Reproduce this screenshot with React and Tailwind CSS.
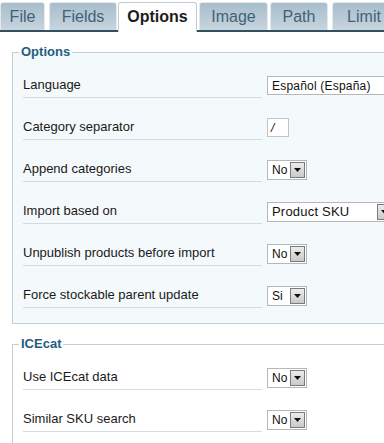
import React from "react";

function Arrow() {
  return (
    <div className="flex items-center justify-center w-[15px] h-[16px] border border-[#7b7b7b] bg-gradient-to-b from-[#ececec] to-[#c9c9c9] shrink-0">
      <svg width="7" height="4" viewBox="0 0 7 4">
        <polygon points="0,0 7,0 3.5,4" fill="#111" />
      </svg>
    </div>
  );
}

function SmallSelect({ value }) {
  return (
    <div className="flex items-center justify-between w-[40px] h-[20px] border border-[#b3b8bc] bg-white pl-[4px] pr-[1px] mt-[1px]">
      <span className="text-[12px] leading-[16px] text-[#111]">{value}</span>
      <Arrow />
    </div>
  );
}

function Row({ label, children }) {
  return (
    <div className="flex items-start">
      <div className="w-[239px] h-[23px] border-b border-[#d5dce0] text-[13px] leading-[20px] text-[#1a1a1a] shrink-0">
        {label}
      </div>
      <div className="ml-[5px] shrink-0">{children}</div>
    </div>
  );
}

function Tab({ label, w, active }) {
  if (active) {
    return (
      <div
        className={`${w} h-[30px] -mb-[2px] flex items-center justify-center bg-white border border-b-0 border-[#c3cbd0] rounded-t-[3px] text-[16px] font-bold text-[#1c1c1c] pb-[2px] relative`}
      >
        {label}
      </div>
    );
  }
  return (
    <div
      className={`${w} h-[28px] flex items-center justify-center bg-gradient-to-b from-[#a8bdcb] to-[#c7d5de] border-x border-t border-[#e2eaef] rounded-t-[3px] text-[16px] text-[#42627a] shrink-0`}
    >
      {label}
    </div>
  );
}

export default function App() {
  return (
    <div className="w-[384px] h-[443px] overflow-hidden bg-white font-['Liberation_Sans',Arial,sans-serif]">
      <div className="pt-[2px] flex items-end border-b-2 border-[#34505f] w-[400px]">
        <Tab label="File" w="w-[45px]" />
        <div className="w-[4px] shrink-0" />
        <Tab label="Fields" w="w-[68px]" />
        <div className="w-[1px] shrink-0" />
        <Tab label="Options" w="w-[79px] shrink-0" active />
        <div className="w-[2px] shrink-0" />
        <Tab label="Image" w="w-[69px]" />
        <div className="w-[2px] shrink-0" />
        <Tab label="Path" w="w-[58px]" />
        <div className="w-[4px] shrink-0" />
        <Tab label="Limit" w="w-[64px]" />
      </div>

      <fieldset className="ml-[12px] mt-[12px] w-[400px] border border-[#c6ced3] bg-[#f4f9fc] pl-[10px] pt-[15px] pb-[15px]">
        <legend className="ml-[-4px] px-[2px] text-[13px] font-bold leading-[16px] text-[#1f5e7e]">
          Options
        </legend>
        <div className="flex flex-col gap-[19px]">
          <Row label="Language">
            <div className="flex items-center w-[140px] h-[19px] border border-[#b3b8bc] bg-white pl-[4px] mt-[1px]">
              <span className="text-[12px] leading-[16px] text-[#111] tracking-[0.2px]">Español (España)</span>
            </div>
          </Row>
          <Row label="Category separator">
            <div className="flex items-center w-[22px] h-[19px] border border-[#c0c5c9] bg-white pl-[3px] mt-[1px]">
              <span className="text-[12px] leading-[16px] text-[#111] italic">/</span>
            </div>
          </Row>
          <Row label="Append categories">
            <SmallSelect value="No" />
          </Row>
          <Row label="Import based on">
            <div className="flex items-center justify-between w-[127px] h-[20px] border border-[#b3b8bc] bg-white pl-[4px] pr-[1px] mt-[1px]">
              <span className="text-[13px] leading-[16px] text-[#111] tracking-[0.2px]">Product SKU</span>
              <Arrow />
            </div>
          </Row>
          <Row label="Unpublish products before import">
            <SmallSelect value="No" />
          </Row>
          <Row label="Force stockable parent update">
            <SmallSelect value="Si" />
          </Row>
        </div>
      </fieldset>

      <fieldset className="ml-[12px] mt-[12px] w-[400px] border border-[#c6ced3] bg-white pl-[10px] pt-[15px] pb-[15px]">
        <legend className="ml-[-4px] px-[2px] text-[13px] font-bold leading-[16px] text-[#1f5e7e]">
          ICEcat
        </legend>
        <div className="flex flex-col gap-[19px]">
          <Row label="Use ICEcat data">
            <SmallSelect value="No" />
          </Row>
          <Row label="Similar SKU search">
            <SmallSelect value="No" />
          </Row>
        </div>
      </fieldset>
    </div>
  );
}
